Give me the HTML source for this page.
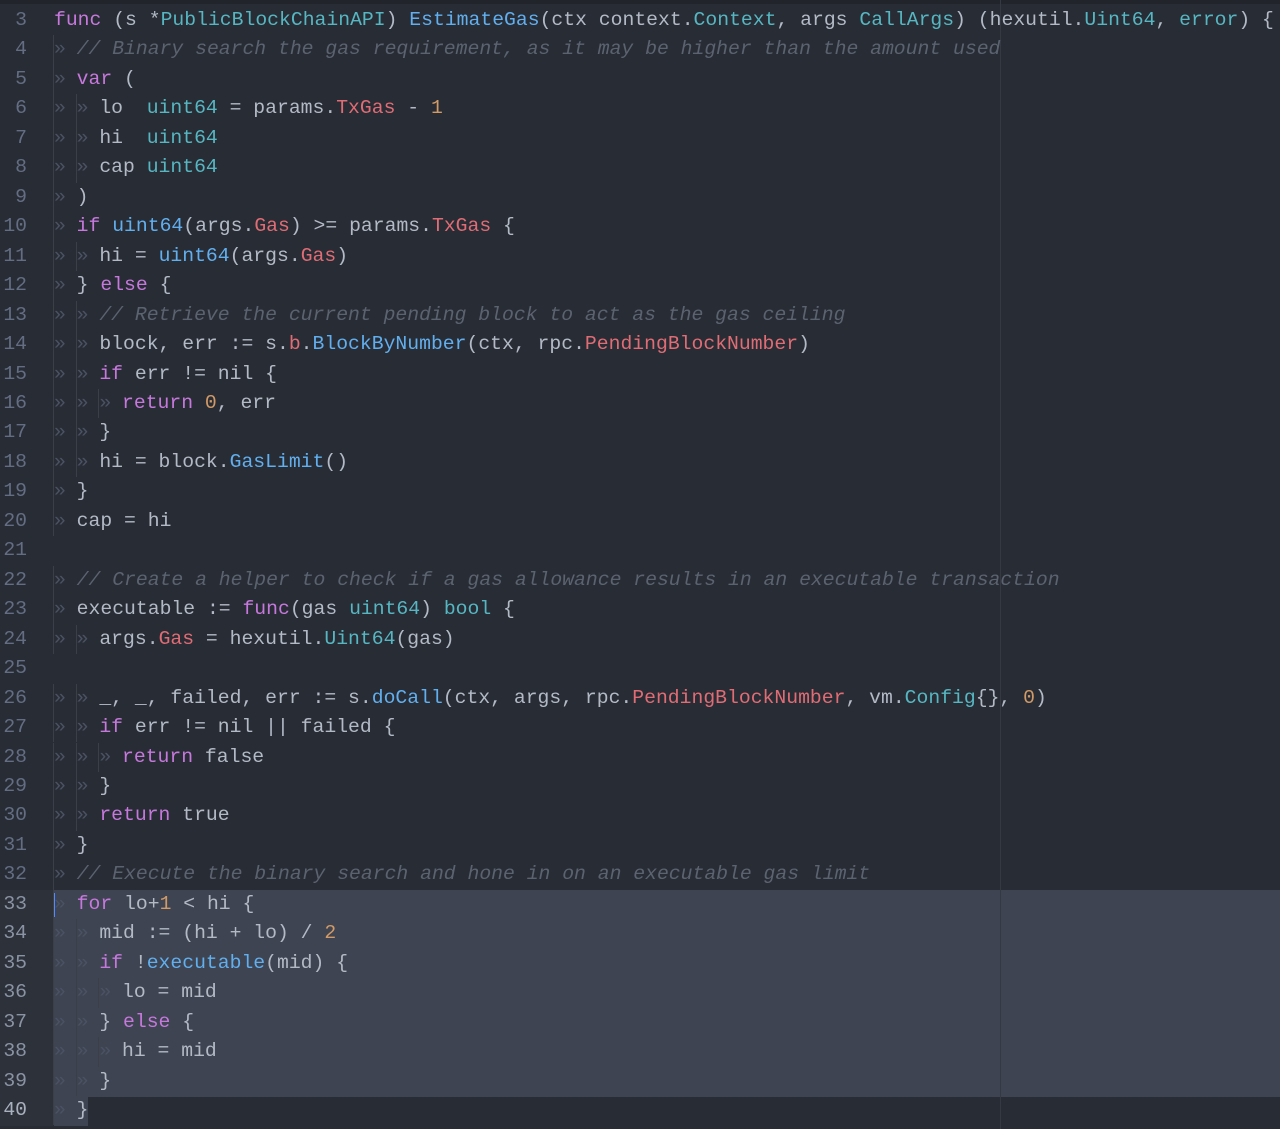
<!DOCTYPE html>
<html><head><meta charset="utf-8"><style>
html,body{margin:0;padding:0;background:#282c34;width:1280px;height:1129px;overflow:hidden}
body{position:relative;font-family:"Liberation Mono","DejaVu Sans Mono",monospace;font-size:19.74px;color:#b3bac6}
.top{position:absolute;left:0;top:0;width:1280px;height:4px;background:#21252b}
.row{position:absolute;left:0;height:29.46px;line-height:29.46px;white-space:pre}
.num{position:absolute;left:0;width:27px;text-align:right;color:#636d83}
.code{position:absolute;left:54px;}
.sel{position:absolute;background:#3e4451}
.t{display:inline-block;width:2ch;border-left:1px solid #3b4048;margin-left:-1px;color:#4b5263;box-sizing:border-box;padding-left:0}
.k{color:#c678dd}.c{color:#56b6c2}.f{color:#61afef}.r{color:#e06c75}.n{color:#d19a66}.m{color:#5c6370;font-style:italic}
.wrap{position:absolute;left:1000px;top:0;width:1px;height:1129px;background:#343944}
</style></head><body>
<div class="top"></div>
<div class="sel" style="left:0;top:890px;width:53px;height:236px;background:#2c313a"></div>
<div class="sel" style="left:54px;top:890px;width:1226px;height:206.5px"></div>
<div class="sel" style="left:54px;top:1096px;width:34px;height:29.5px"></div>
<div class="wrap"></div>
<div style="position:absolute;left:53px;top:893px;width:2px;height:24px;background:#528bff"></div>
<div class="row" style="top:6px"><span class="num">3</span><span class="code"><span class="k">func</span> (s *<span class="c">PublicBlockChainAPI</span>) <span class="f">EstimateGas</span>(ctx context.<span class="c">Context</span>, args <span class="c">CallArgs</span>) (hexutil.<span class="c">Uint64</span>, <span class="c">error</span>) {</span></div>
<div class="row" style="top:35.46px"><span class="num">4</span><span class="code"><span class="t">»</span><span class="m">// Binary search the gas requirement, as it may be higher than the amount used</span></span></div>
<div class="row" style="top:64.92px"><span class="num">5</span><span class="code"><span class="t">»</span><span class="k">var</span> (</span></div>
<div class="row" style="top:94.38px"><span class="num">6</span><span class="code"><span class="t">»</span><span class="t">»</span>lo  <span class="c">uint64</span> = params.<span class="r">TxGas</span> - <span class="n">1</span></span></div>
<div class="row" style="top:123.84px"><span class="num">7</span><span class="code"><span class="t">»</span><span class="t">»</span>hi  <span class="c">uint64</span></span></div>
<div class="row" style="top:153.3px"><span class="num">8</span><span class="code"><span class="t">»</span><span class="t">»</span>cap <span class="c">uint64</span></span></div>
<div class="row" style="top:182.76px"><span class="num">9</span><span class="code"><span class="t">»</span>)</span></div>
<div class="row" style="top:212.22px"><span class="num">10</span><span class="code"><span class="t">»</span><span class="k">if</span> <span class="f">uint64</span>(args.<span class="r">Gas</span>) &gt;= params.<span class="r">TxGas</span> {</span></div>
<div class="row" style="top:241.68px"><span class="num">11</span><span class="code"><span class="t">»</span><span class="t">»</span>hi = <span class="f">uint64</span>(args.<span class="r">Gas</span>)</span></div>
<div class="row" style="top:271.14px"><span class="num">12</span><span class="code"><span class="t">»</span>} <span class="k">else</span> {</span></div>
<div class="row" style="top:300.6px"><span class="num">13</span><span class="code"><span class="t">»</span><span class="t">»</span><span class="m">// Retrieve the current pending block to act as the gas ceiling</span></span></div>
<div class="row" style="top:330.06px"><span class="num">14</span><span class="code"><span class="t">»</span><span class="t">»</span>block, err := s.<span class="r">b</span>.<span class="f">BlockByNumber</span>(ctx, rpc.<span class="r">PendingBlockNumber</span>)</span></div>
<div class="row" style="top:359.52px"><span class="num">15</span><span class="code"><span class="t">»</span><span class="t">»</span><span class="k">if</span> err != nil {</span></div>
<div class="row" style="top:388.98px"><span class="num">16</span><span class="code"><span class="t">»</span><span class="t">»</span><span class="t">»</span><span class="k">return</span> <span class="n">0</span>, err</span></div>
<div class="row" style="top:418.44px"><span class="num">17</span><span class="code"><span class="t">»</span><span class="t">»</span>}</span></div>
<div class="row" style="top:447.9px"><span class="num">18</span><span class="code"><span class="t">»</span><span class="t">»</span>hi = block.<span class="f">GasLimit</span>()</span></div>
<div class="row" style="top:477.36px"><span class="num">19</span><span class="code"><span class="t">»</span>}</span></div>
<div class="row" style="top:506.82px"><span class="num">20</span><span class="code"><span class="t">»</span>cap = hi</span></div>
<div class="row" style="top:536.28px"><span class="num">21</span><span class="code"></span></div>
<div class="row" style="top:565.74px"><span class="num">22</span><span class="code"><span class="t">»</span><span class="m">// Create a helper to check if a gas allowance results in an executable transaction</span></span></div>
<div class="row" style="top:595.2px"><span class="num">23</span><span class="code"><span class="t">»</span>executable := <span class="k">func</span>(gas <span class="c">uint64</span>) <span class="c">bool</span> {</span></div>
<div class="row" style="top:624.66px"><span class="num">24</span><span class="code"><span class="t">»</span><span class="t">»</span>args.<span class="r">Gas</span> = hexutil.<span class="c">Uint64</span>(gas)</span></div>
<div class="row" style="top:654.12px"><span class="num">25</span><span class="code"></span></div>
<div class="row" style="top:683.58px"><span class="num">26</span><span class="code"><span class="t">»</span><span class="t">»</span>_, _, failed, err := s.<span class="f">doCall</span>(ctx, args, rpc.<span class="r">PendingBlockNumber</span>, vm.<span class="c">Config</span>{}, <span class="n">0</span>)</span></div>
<div class="row" style="top:713.04px"><span class="num">27</span><span class="code"><span class="t">»</span><span class="t">»</span><span class="k">if</span> err != nil || failed {</span></div>
<div class="row" style="top:742.5px"><span class="num">28</span><span class="code"><span class="t">»</span><span class="t">»</span><span class="t">»</span><span class="k">return</span> false</span></div>
<div class="row" style="top:771.96px"><span class="num">29</span><span class="code"><span class="t">»</span><span class="t">»</span>}</span></div>
<div class="row" style="top:801.42px"><span class="num">30</span><span class="code"><span class="t">»</span><span class="t">»</span><span class="k">return</span> true</span></div>
<div class="row" style="top:830.88px"><span class="num">31</span><span class="code"><span class="t">»</span>}</span></div>
<div class="row" style="top:860.34px"><span class="num">32</span><span class="code"><span class="t">»</span><span class="m">// Execute the binary search and hone in on an executable gas limit</span></span></div>
<div class="row" style="top:889.8px"><span class="num" style="color:#8a93a3">33</span><span class="code"><span class="t">»</span><span class="k">for</span> lo+<span class="n">1</span> &lt; hi {</span></div>
<div class="row" style="top:919.26px"><span class="num" style="color:#8a93a3">34</span><span class="code"><span class="t">»</span><span class="t">»</span>mid := (hi + lo) / <span class="n">2</span></span></div>
<div class="row" style="top:948.72px"><span class="num" style="color:#8a93a3">35</span><span class="code"><span class="t">»</span><span class="t">»</span><span class="k">if</span> !<span class="f">executable</span>(mid) {</span></div>
<div class="row" style="top:978.18px"><span class="num" style="color:#8a93a3">36</span><span class="code"><span class="t">»</span><span class="t">»</span><span class="t">»</span>lo = mid</span></div>
<div class="row" style="top:1007.64px"><span class="num" style="color:#8a93a3">37</span><span class="code"><span class="t">»</span><span class="t">»</span>} <span class="k">else</span> {</span></div>
<div class="row" style="top:1037.1px"><span class="num" style="color:#8a93a3">38</span><span class="code"><span class="t">»</span><span class="t">»</span><span class="t">»</span>hi = mid</span></div>
<div class="row" style="top:1066.56px"><span class="num" style="color:#8a93a3">39</span><span class="code"><span class="t">»</span><span class="t">»</span>}</span></div>
<div class="row" style="top:1096.02px"><span class="num" style="color:#aab1be">40</span><span class="code"><span class="t">»</span>}</span></div>
</body></html>
